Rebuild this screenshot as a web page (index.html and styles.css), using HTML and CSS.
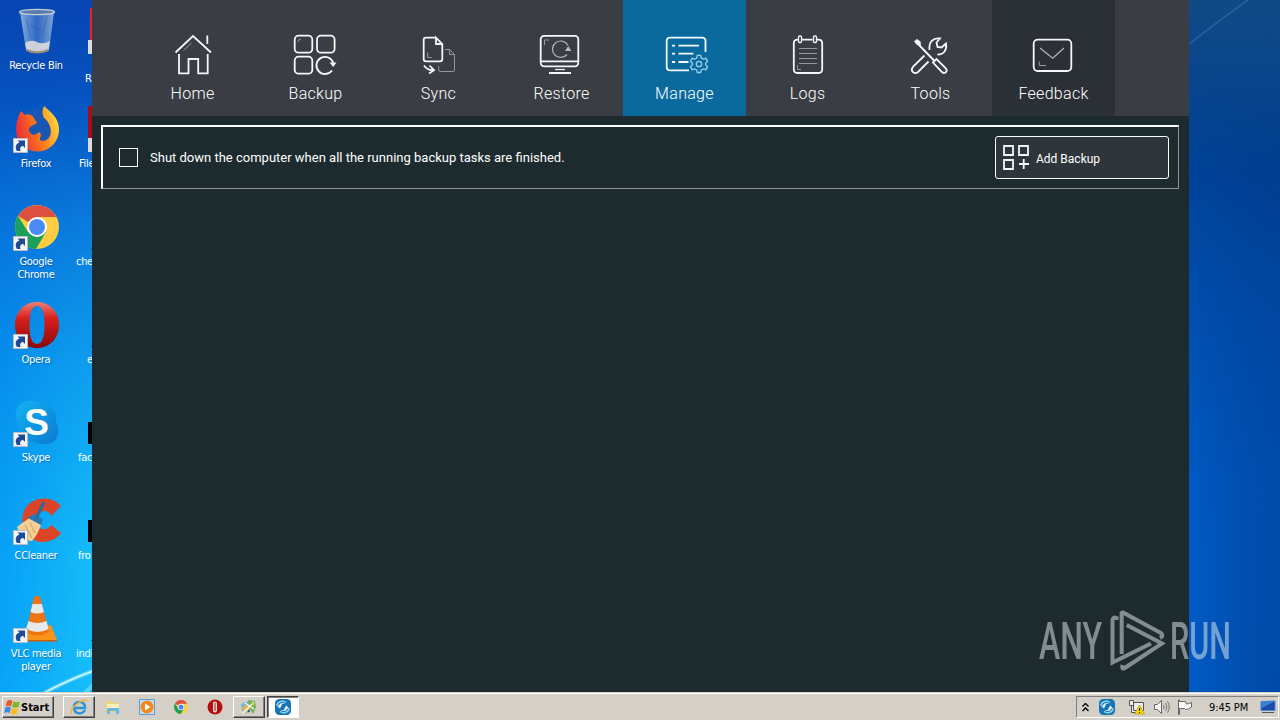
FILE: index.html
```html
<!DOCTYPE html>
<html lang="en">
<head>
    <meta charset="UTF-8">
    <meta name="viewport" content="width=device-width, initial-scale=1.0">
    <title>Manage</title>
    <link rel="stylesheet" href="styles.css">
</head>
<body>

<!-- shared symbols -->
<svg class="defs" width="0" height="0">
    <defs>
        <linearGradient id="fox" x1="0" y1=".6" x2="1" y2=".3"><stop offset="0" stop-color="#e8283c"/><stop offset=".5" stop-color="#ff7a1a"/><stop offset="1" stop-color="#ffdc3a"/></linearGradient>
        <linearGradient id="operaRed" x1="0" y1="0" x2="0" y2="1"><stop offset="0" stop-color="#f08078"/><stop offset=".35" stop-color="#d8201c"/><stop offset="1" stop-color="#8c0808"/></linearGradient>
        <linearGradient id="skype" x1="0" y1="0" x2="1" y2="1"><stop offset="0" stop-color="#12b4f4"/><stop offset="1" stop-color="#0b78d0"/></linearGradient>
        <linearGradient id="glass" x1="0" y1="0" x2="1" y2="0"><stop offset="0" stop-color="#a9c6e8" stop-opacity=".8"/><stop offset=".5" stop-color="#4b80cc" stop-opacity=".6"/><stop offset="1" stop-color="#a0bcdc" stop-opacity=".8"/></linearGradient>
    </defs>
    <symbol id="shortcut" viewBox="0 0 15 15">
        <path d="M.5.5h14v14H.5z" fill="#f4f4f4" stroke="#b9bcc2"/>
        <path d="M4 13C1.500 9 3 5.500 6.500 4.500L4.500 2.500H12V10L9.800 7.800C7.500 8.500 6.500 10 7.500 13z" fill="#1d4a92"/>
    </symbol>
    <symbol id="chrome" viewBox="0 0 44 44">
        <circle cx="22" cy="22" r="22" fill="#ffcd41"/>
        <path d="M22 22L3 11A22 22 0 0 1 41.500 12H22z" fill="#dc4f41"/>
        <path d="M3 11A22 22 0 0 0 21 44L31 27 13 27z" fill="#1ba05c"/>
        <circle cx="22" cy="22" r="10" fill="#fff"/>
        <circle cx="22" cy="22" r="8" fill="#4c8bf5"/>
    </symbol>
    <symbol id="opera" viewBox="0 0 44 46">
        <path fill="url(#operaRed)" fill-rule="evenodd" d="M22 0C35 0 44 10 44 23S35 46 22 46 0 36 0 23 9 0 22 0zM22 4C16 4 14.500 13 14.500 23S16 42 22 42 29.500 33 29.500 23 28 4 22 4z"/>
    </symbol>
    <symbol id="swirl" viewBox="0 0 16 16">
        <rect width="16" height="16" rx="4.500" fill="#1474b4"/>
        <path d="M1.500 6.500C3 2.500 7.500 1 11 3.500M14.500 9.500C13 13.500 8.500 15 5 12.500" fill="none" stroke="#8cd4f4" stroke-width="1.500"/>
        <path d="M11.500 5.500Q8 3.500 5.500 6.500H7L4.500 9.500 2 6.500H3.500Q6 2 11.500 5.500zM4.500 10.500Q8 12.500 10.500 9.500H9L11.500 6.500 14 9.500H12.500Q10 14 4.500 10.500z" fill="#f2faff"/>
    </symbol>
</svg>

<div class="desktop">
    <svg class="wallpaper" width="1280" height="692" viewBox="0 0 1280 692">
        <defs>
            <linearGradient id="skyL" x1="0" y1="0" x2="0" y2="1"><stop offset="0" stop-color="#0745b2"/><stop offset=".15" stop-color="#0653c0"/><stop offset=".32" stop-color="#0772d8"/><stop offset=".55" stop-color="#0894ec"/><stop offset=".8" stop-color="#0aaef6"/><stop offset="1" stop-color="#0cb2f8"/></linearGradient>
            <linearGradient id="skyR" x1="0" y1="0" x2="0" y2="1"><stop offset="0" stop-color="#104a86"/><stop offset=".25" stop-color="#003e90"/><stop offset=".45" stop-color="#0048a2"/><stop offset=".7" stop-color="#0050b2"/><stop offset="1" stop-color="#0050b0"/></linearGradient>
            <linearGradient id="edgeL" x1="0" y1="0" x2="1" y2="0"><stop offset="0" stop-color="#0080f4" stop-opacity=".3"/><stop offset="1" stop-color="#30d8ff" stop-opacity=".3"/></linearGradient>
            <linearGradient id="edgeR" x1="0" y1="0" x2="1" y2="0"><stop offset="0" stop-color="#0064d4" stop-opacity=".55"/><stop offset="1" stop-color="#004098" stop-opacity=".3"/></linearGradient>
            <linearGradient id="fade" x1="0" y1="0" x2="0" y2="1"><stop offset=".1" stop-color="#000"/><stop offset=".8" stop-color="#fff"/></linearGradient>
            <mask id="lower"><rect width="1280" height="692" fill="url(#fade)"/></mask>
        </defs>
        <rect width="92" height="692" fill="url(#skyL)"/>
        <rect x="1189" width="91" height="692" fill="url(#skyR)"/>
        <g mask="url(#lower)">
            <rect width="92" height="692" fill="url(#edgeL)"/>
            <rect x="1189" width="91" height="692" fill="url(#edgeR)"/>
        </g>
        <path d="M1189 44Q1220 20 1248 0" fill="none" stroke="#4a80b8" stroke-opacity=".5" stroke-width="1.500"/>
        <path d="M44 693Q68 680 93 671M85 693l8-8" fill="none" stroke="#9cecff" stroke-width="4" stroke-opacity=".45"/>
        <path d="M44 693Q68 680 93 671" fill="none" stroke="#d8f8ff" stroke-width="1.500"/>
    </svg>

    <div class="shortcuts">
        <div class="shortcut">
            <svg width="48" height="48" viewBox="0 0 48 48">
                <path d="M7 4L13 42Q24 48 36 42L41 4z" fill="url(#glass)"/>
                <path d="M12 35Q18 31 24 34T37 33L35.500 42Q24 47 13.500 42z" fill="#e6e0dc" opacity=".85"/>
                <path d="M13.500 42Q24 47 35.500 42" fill="none" stroke="#9a8c7c" stroke-width="2"/>
                <path d="M13 10l5 20M34 9l-5 20M17 17l12 7" stroke="#2b5aa8" stroke-opacity=".5" fill="none"/>
                <ellipse cx="24" cy="4" rx="17.500" ry="2.600" fill="#5a7cae" stroke="#c2ccd6" stroke-width="1.300"/>
            </svg>
            <span>Recycle Bin</span>
        </div>
        <div class="shortcut">
            <svg width="48" height="48" viewBox="0 0 48 48">
                <circle cx="25" cy="20" r="17" fill="#1857b4"/>
                <path d="M31 0C36 5 46 11 46 23A21.500 21.500 0 0 1 3 25C3 17 5 10 8 5L12 9C16 7 20 9 22 14L24 17 17 21C14 24 17 28 21 29L27 26 28 30C24 35 31 37 36 32C40 26 37 16 31 12Q28 6 31 0z" fill="url(#fox)"/>
            </svg>
            <svg class="arrow" width="15" height="15"><use href="#shortcut"/></svg>
            <span>Firefox</span>
        </div>
        <div class="shortcut">
            <svg width="48" height="48" viewBox="0 0 48 48"><use href="#chrome" x="2" y="1" width="44" height="44"/></svg>
            <svg class="arrow" width="15" height="15"><use href="#shortcut"/></svg>
            <span>Google<br>Chrome</span>
        </div>
        <div class="shortcut">
            <svg width="48" height="48" viewBox="0 0 48 48"><use href="#opera" x="2" y="0" width="44" height="46"/></svg>
            <svg class="arrow" width="15" height="15"><use href="#shortcut"/></svg>
            <span>Opera</span>
        </div>
        <div class="shortcut">
            <svg width="48" height="48" viewBox="0 0 48 48">
                <path d="M14 1C21 0 25 2 29 3C40 5 44 13 43 22C48 32 44 43 34 44C28 45 25 43 23 42C11 42 5 34 5 23C0 13 4 3 14 1z" fill="url(#skype)"/>
                <text class="skype-letter" x="23.500" y="35" text-anchor="middle">S</text>
            </svg>
            <svg class="arrow" width="15" height="15"><use href="#shortcut"/></svg>
            <span>Skype</span>
        </div>
        <div class="shortcut">
            <svg width="48" height="48" viewBox="0 0 48 48">
                <path d="M48 8C36-5 14 0 10 16C6 34 20 45 31 44C40 43 45 39 48 35L38 27C35 32 28 33 25 28C22 20 26 14 31 13C35 13 37 15 38 18z" fill="#dc4428"/>
                <path d="M4 29Q13 22 17 20L28 27Q25 36 19 43Q10 44 4 29z" fill="#f5cf94"/>
                <path d="M15 20l5-4 10 5-2 6z" fill="#2878b4"/>
                <path d="M23 21L31 4" stroke="#246ca4" stroke-width="3"/>
                <path d="M12 27l7 13M17 25l5 10" stroke="#d39a50"/>
            </svg>
            <svg class="arrow" width="15" height="15"><use href="#shortcut"/></svg>
            <span>CCleaner</span>
        </div>
        <div class="shortcut">
            <svg width="48" height="48" viewBox="0 0 48 48">
                <path d="M10 32L38 29 44 44H6z" fill="#f8941a"/>
                <path d="M6 44h38v1.500H6z" fill="#d05a08"/>
                <path d="M21 1Q24-1 27 1L36 36Q25 43 13 36z" fill="#ee7412"/>
                <path d="M19.500 8H28.800L31 16Q24 19 17.500 16zM15.500 25Q24 29 33.500 25L35.500 33Q25 39 13 33z" fill="#e6e8ea"/>
            </svg>
            <svg class="arrow" width="15" height="15"><use href="#shortcut"/></svg>
            <span>VLC media<br>player</span>
        </div>
    </div>

    <!-- second column, mostly hidden behind the window -->
    <div class="shortcuts-cut">
        <div class="cut low"><i class="strip red"></i><i class="corner"></i><span>R</span></div>
        <div class="cut near"><i class="strip darkred"></i><i class="corner"></i><span>File</span></div>
        <div class="cut"><i class="dot"></i><span>che</span></div>
        <div class="cut far"><i class="dot"></i><span>e</span></div>
        <div class="cut mid"><i class="strip black"></i><span>fac</span></div>
        <div class="cut mid"><i class="strip black"></i><span>fro</span></div>
        <div class="cut"><i class="dot"></i><span>indi</span></div>
    </div>

    <div class="window">
        <nav class="nav">
            <a class="tab">
                <svg width="45" height="44" viewBox="0 0 45 44">
                    <path d="M5.500 20.500L23 4 41 20.500M37.300 3.500v8.500M9 22v19.300h9.500V27h9.700v14.300h9.500V22"/>
                    <path class="dim" d="M13.500 18.500l8-7.500"/>
                </svg>
                <span>Home</span>
            </a>
            <a class="tab">
                <svg width="45" height="44" viewBox="0 0 45 44">
                    <rect x="1.700" y="3.700" width="17.600" height="17" rx="4"/>
                    <rect x="24" y="3.700" width="17.600" height="17" rx="4"/>
                    <rect x="1.700" y="24.700" width="17.600" height="17" rx="4"/>
                    <path d="M39 38.500A8.600 8.600 0 1 1 40.300 31"/>
                    <path class="fill" d="M36.500 30.500h7l-3.300 4.500z"/>
                    <path class="dim" d="M5 10q0-3 3-3"/>
                </svg>
                <span>Backup</span>
            </a>
            <a class="tab">
                <svg width="45" height="44" viewBox="0 0 45 44">
                    <path d="M20 5.700H10q-2.300 0-2.300 2.300V27q0 2.300 2.300 2.300h14q2.300 0 2.300-2.300V12L20 5.700V12h6.300"/>
                    <path class="dim" d="M11.700 20.500v5h4M29 17.500h4.500l5 5V38q0 1.500-1.500 1.500H24.500q-1.800 0-1.800-1.800V34M33.500 17.500v5h5"/>
                    <path d="M8 33.500q3.500 5 9 4.700M13.500 33.500l4.500 4.700-5 3.300"/>
                </svg>
                <span>Sync</span>
            </a>
            <a class="tab">
                <svg width="45" height="44" viewBox="0 0 45 44">
                    <rect x="1.700" y="3.800" width="37.600" height="30.500" rx="3.500"/>
                    <path d="M2 29.300h37M10 41h22"/>
                    <path d="M16 37.500h10" stroke-width="1.200"/>
                    <path class="dim" d="M5.500 13V8H10"/>
                    <path class="soft-line" d="M28 22.500A8.200 8.200 0 1 1 29 13.500"/>
                    <path class="fill soft" d="M26 19l3.300-5 3 5z"/>
                </svg>
                <span>Restore</span>
            </a>
            <a class="tab active">
                <svg width="45" height="44" viewBox="0 0 50 44" overflow="visible" preserveAspectRatio="xMinYMin slice">
                    <path d="M43.500 20V9q0-3.300-3.300-3.300H8Q4.700 5.700 4.700 9v26Q4.700 38.300 8 38.300h19"/>
                    <path d="M10 13.700h3M16.500 13.700H37M10 21.700h3M16.500 21.700H31.500M10 30h3M16.500 30h10"/>
                    <path class="gear" d="M35.300 23.300h3.400l.6 2.700 2 1.100 2.600-.8 1.700 2.900-2 2v1.600l2 2-1.700 2.900-2.600-.8-2 1.100-.6 2.500h-3.400l-.6-2.500-2-1.100-2.600.8-1.700-2.900 2-2v-1.600l-2-2 1.700-2.900 2.600.8 2-1.100z"/>
                    <circle class="gear" cx="37" cy="32" r="2.700"/>
                </svg>
                <span>Manage</span>
            </a>
            <a class="tab">
                <svg width="45" height="44" viewBox="0 0 45 44">
                    <path d="M13 7.700h-.5q-3.700 0-3.700 3.700V37.300Q8.800 41 12.500 41h21q3.700 0 3.700-3.700V11.400q0-3.700-3.700-3.700H32M17 7.700H27.500"/>
                    <rect x="13.500" y="4" width="3" height="6.500" rx="1" stroke-width="1.300"/>
                    <rect x="28.500" y="4" width="3" height="6.500" rx="1" stroke-width="1.300"/>
                    <path class="dim" d="M14 16.500h18M14 21.500h18M14 26.500h18M14 31.500h18M12.500 33v4.500H16"/>
                </svg>
                <span>Logs</span>
            </a>
            <a class="tab">
                <svg width="45" height="44" viewBox="0 0 45 44">
                    <path d="M21.500 18C20.500 10 25 5.500 32 6.500L28.500 10.500 29.500 15 33.500 15.500 38 11.500C39 18 36 22.500 29.500 22.500M16.500 23.500L4.700 35.200C2 39 6.500 43 10 40L20.500 29.500"/>
                    <path d="M10 12L26 28.500M25 30.500L28.500 27 38 36.500C40 39.500 36.500 42.500 34 40z"/>
                    <path class="fill" d="M6 9.500L9 7 12.500 9.500 13 13.500 9 13z"/>
                </svg>
                <span>Tools</span>
            </a>
            <a class="tab feedback">
                <svg width="45" height="44" viewBox="0 0 45 44">
                    <rect x="2.700" y="7.700" width="37.600" height="31.300" rx="4"/>
                    <path class="soft-line" d="M9 16L21.700 26.300 33 16"/>
                    <path class="dim" d="M8.300 29.500v4H15"/>
                </svg>
                <span>Feedback</span>
            </a>
        </nav>

        <div class="toolbar">
            <label class="option"><i class="box"></i><span>Shut down the computer when all the running backup tasks are finished.</span></label>
            <button class="add-button">
                <svg width="28" height="28" viewBox="0 0 28 28">
                    <path d="M2 3h9v9H2zM17 3h9v9h-9zM2 17h9v9H2zM21.700 16v10M17 21h10"/>
                </svg>
                <span>Add Backup</span>
            </button>
        </div>
    </div>

    <svg class="watermark" width="230" height="90" viewBox="0 0 230 90">
        <text x="9" y="59" textLength="63" lengthAdjust="spacingAndGlyphs">ANY</text>
        <text x="140" y="59" textLength="61" lengthAdjust="spacingAndGlyphs">RUN</text>
        <path d="M86.500 20V18Q82.500 16.500 82.500 21V62.500L121 43.500M91.700 54V13L93 12.500 131 33Q134 36 130 38M96.700 25L132 43.500 94 68.500Q91.500 69 92.500 65"/>
    </svg>

    <div class="taskbar">
        <div class="start">
            <svg width="17" height="17" viewBox="0 0 17 17">
                <path d="M3 2Q6 0 8.500 2L7 7.500Q4.500 6 1.500 7.500z" fill="#e8582c"/>
                <path d="M9.500 2.500Q12 4 16 2.500L14.500 8Q11 9.500 8 8z" fill="#7cba2c"/>
                <path d="M1.500 8.500Q4 7 7 8.500L5.500 14Q3 12.500 0 14z" fill="#3a8ce0"/>
                <path d="M8 9Q11 10.500 14 9L12.500 15Q9 16.500 6.500 14.500z" fill="#fbbc1c"/>
            </svg>
            <b>Start</b>
        </div>
        <div class="tasks">
            <div class="task raised">
                <svg width="18" height="18" viewBox="0 0 18 18">
                    <path d="M15 12Q13 15.500 9.500 15.500 4 15 4 9.500T9.500 4Q15 4 15 10H5" fill="none" stroke="#2c94e0" stroke-width="2.500"/>
                    <path d="M2 16Q-1 12 7 6T17 3" fill="none" stroke="#efb82c" stroke-width="1.500"/>
                </svg>
            </div>
            <div class="task">
                <svg width="18" height="18" viewBox="0 0 18 18">
                    <path d="M2 3h5l1 2h7v9H2z" fill="#f2d574"/><path d="M3 6h12v4H3z" fill="#fbf0b8"/>
                    <path d="M3 16v-5q0-1 1-1h10q1 0 1 1v5h-3v-3H6v3z" fill="#68b8e4"/>
                </svg>
            </div>
            <div class="task">
                <svg width="18" height="18" viewBox="0 0 18 18">
                    <path d="M1.500 1.500h15v15h-15z" fill="#c4def4" stroke="#5a9cd4"/>
                    <circle cx="9" cy="9" r="6.500" fill="#f4861c"/><path d="M7 5.500v7L12.500 9z" fill="#fff"/>
                </svg>
            </div>
            <div class="task"><svg width="14" height="14"><use href="#chrome"/></svg></div>
            <div class="task">
                <svg width="16" height="16" viewBox="0 0 16 16">
                    <circle cx="8" cy="8" r="7.500" fill="#b80e10"/><rect x="6" y="2.500" width="4" height="11" rx="2" fill="#f0dcdc"/><path d="M8 4v8" stroke="#a01010"/>
                </svg>
            </div>
            <div class="task raised">
                <svg width="18" height="18" viewBox="0 0 18 18">
                    <path d="M1 6l8-3 5 4-6 8-6-2z" fill="#74b6d8"/><path d="M2 10q6-6 9-1l-6 7z" fill="#e4b64c"/>
                    <path d="M8 2l7 1 1 6-3 7-4-7z" fill="#76b050"/><path d="M3 15L14 4M5 5l9 6" stroke="#fff" stroke-width="1.200"/>
                    <circle cx="13" cy="6" r="1.300" fill="#e8d030"/><circle cx="9" cy="13" r="1.200" fill="#28689c"/>
                </svg>
            </div>
            <div class="task current"><svg width="16" height="16"><use href="#swirl"/></svg></div>
        </div>
        <div class="tray">
            <svg class="chevrons" width="7" height="9" viewBox="0 0 7 9"><path d="M.5 3.500l3-3 3 3M.5 8l3-3 3 3" fill="none" stroke="#000" stroke-width="1.400"/></svg>
            <svg class="sync-app" width="16" height="16"><use href="#swirl"/></svg>
            <svg class="network" width="17" height="16" viewBox="0 0 17 16">
                <path d="M5.500 3.500h10v8h-10zM1.500 1.500h4v5h-4zM3.500 6.500v7h5" fill="#eee" stroke="#555"/>
                <path d="M11.500 6L16.500 15H6.500z" fill="#ffd800" stroke="#b09000" stroke-width=".6"/><path d="M11.500 9v3M11.500 13v1" stroke="#222" stroke-width="1.200"/>
            </svg>
            <svg class="sound" width="17" height="16" viewBox="0 0 17 16">
                <path d="M1.500 5.500h3l4-4v13l-4-4h-3z" fill="#f8f8f8" stroke="#666"/>
                <path d="M10.500 6q1.500 2 0 4M12.500 4q3 4 0 8M14.500 2.500q3.500 5.500 0 11" fill="none" stroke="#777"/>
            </svg>
            <svg class="flag" width="16" height="16" viewBox="0 0 16 16"><path d="M1.500 1v14.500h1V9.500h5l1 1q3 0 6-2.500V3.500q-3 1.500-5 1.500L8.500 2.500h-6V1z" fill="#fafafa" stroke="#666"/></svg>
            <span class="clock">9:45 PM</span>
            <svg width="16" height="14" viewBox="0 0 16 14"><path d="M1 1.500L15 1v9.500H1z" fill="#1c4ca8" stroke="#4888d8"/><path d="M1.500 2l12 0L2 8z" fill="#4080d4"/><path d="M2 12.500h12" stroke="#555"/></svg>
        </div>
    </div>
</div>

</body>
</html>
```
FILE: styles.css
```css
* {
    box-sizing: border-box;
}
body {
    margin: 0;
    overflow: hidden;
    font-family: "DejaVu Sans Condensed", "DejaVu Sans", sans-serif;
    font-size: 11px;
}
.defs {
    position: absolute;
}
svg {
    display: block;
    flex: none;
}
.desktop {
    position: relative;
    display: flex;
    width: 1280px;
    height: 720px;
    background-color: #0050b0;
    overflow: hidden;
}
.wallpaper {
    position: absolute;
    left: 0;
    top: 0;
}

/* desktop icons */
.shortcuts {
    position: relative;
    width: 76px;
    padding-top: 8px;
}
.shortcut {
    position: relative;
    height: 98px;
    padding-left: 13px;
    color: #fff;
}
.shortcut .arrow {
    position: absolute;
    left: 13px;
    top: 32px;
}
.shortcut span {
    display: block;
    width: 76px;
    margin: 3px 0 0 -15px;
    line-height: 13px;
    letter-spacing: -0.3px;
    text-align: center;
    text-shadow: 1px 1px 1px rgba(0, 30, 90, 0.35);
}
.skype-letter {
    font: bold 37px "Liberation Sans", sans-serif;
    fill: #fff;
}
.shortcuts-cut {
    position: relative;
    width: 16px;
    padding-top: 8px;
    overflow: hidden;
}
.cut {
    position: relative;
    height: 98px;
    padding-top: 51px;
    line-height: 13px;
    letter-spacing: -0.3px;
    color: #fff;
}
.cut.mid, .cut.near {
    padding-left: 2px;
}
.cut.near {
    padding-left: 3px;
}
.cut.far {
    padding-left: 11px;
}
.cut.low {
    padding: 64px 0 0 9px;
}
.strip, .corner, .dot {
    position: absolute;
    right: 0;
    width: 4px;
}
.strip {
    top: 0;
    height: 32px;
}
.red {
    background-color: #ee2222;
    width: 2px;
}
.darkred {
    background-color: #a80c14;
}
.black {
    top: 22px;
    height: 22px;
    background-color: #000;
}
.corner {
    top: 32px;
    height: 14px;
    background-color: #dcdcdc;
}
.dot {
    top: 44px;
    width: 1px;
    height: 1px;
    background-color: #145070;
}

/* application window */
.window {
    position: relative;
    width: 1097px;
    height: 692px;
    background-color: #1d2b2f;
    color: #fff;
}
.nav {
    display: flex;
    height: 116px;
    padding-left: 39px;
    background-color: #3a3e44;
}
.tab {
    display: flex;
    flex-direction: column;
    align-items: center;
    width: 123px;
    padding-top: 32px;
    font: 300 16px/20px Roboto, "Liberation Sans", sans-serif;
    letter-spacing: 0.3px;
}
.tab span {
    margin-top: 8px;
}
.tab.active {
    background-color: #0a6a9e;
}
.tab.feedback {
    background-color: #2b2f36;
}
.tab svg, .add-button svg {
    fill: none;
    stroke: #f4f8fc;
    stroke-width: 1.8;
}
.tab .dim {
    stroke: #9298a0;
    stroke-width: 1;
}
.tab .soft-line {
    stroke: #b4b8be;
    stroke-width: 1.2;
}
.tab .gear {
    stroke: #9ccdea;
    stroke-width: 1.3;
}
.tab .fill {
    fill: #f4f8fc;
    stroke: none;
}
.tab .soft {
    fill: #b8bcc2;
}
.toolbar {
    display: flex;
    align-items: center;
    justify-content: space-between;
    height: 64px;
    margin: 9px 10px 0 9px;
    padding: 0 9px 1px 16px;
    border-style: solid;
    border-width: 2px 1px 1px 2px;
    border-color: #fff #8a9496 #8a9496 #fff;
}
.option {
    display: flex;
    align-items: center;
    gap: 12px;
    font: 13px/16px Roboto, "Liberation Sans", sans-serif;
}
.option span {
    margin-top: 1px;
}
.box {
    width: 19px;
    height: 19px;
    border: 1px solid #fff;
}
.add-button {
    display: flex;
    align-items: center;
    gap: 6px;
    width: 174px;
    height: 43px;
    padding: 0 6px;
    border: 1px solid #fff;
    border-radius: 3px;
    background-color: #2f363b;
    color: #fff;
    font: 12px/16px Roboto, "Liberation Sans", sans-serif;
}
.add-button span {
    margin-top: 3px;
}

.watermark {
    position: absolute;
    left: 1030px;
    top: 600px;
    opacity: 0.5;
    overflow: visible;
    fill: none;
    stroke: #e8edf0;
    stroke-width: 4;
}
.watermark text {
    font: 500 51px Roboto, sans-serif;
    fill: #e8edf0;
    stroke: none;
}

/* taskbar */
.taskbar {
    position: absolute;
    left: 0;
    bottom: 0;
    display: flex;
    align-items: center;
    width: 1280px;
    height: 28px;
    padding: 2px 1px 1px 2px;
    background-color: #d4d0c8;
    border-top: 1px solid #d4d0c8;
    box-shadow: inset 0 1px #fff;
}
.start, .raised {
    border: 1px solid;
    border-color: #fff #404040 #404040 #fff;
    box-shadow: inset -1px -1px #808080;
}
.start {
    display: flex;
    align-items: center;
    width: 52px;
    height: 22px;
    padding-left: 1px;
}
.start b {
    font-size: 11px;
    letter-spacing: 0;
}
.tasks {
    display: flex;
    gap: 2px;
    margin-left: 9px;
}
.task {
    display: flex;
    align-items: center;
    justify-content: center;
    width: 32px;
    height: 22px;
}
.task.current {
    border: 1px solid;
    border-color: #404040 #fff #fff #404040;
    background-color: #fff;
    box-shadow: inset 1px 1px #808080;
}
.tray {
    display: flex;
    align-items: center;
    width: 203px;
    height: 22px;
    margin-left: auto;
    padding-left: 5px;
    border: 1px solid;
    border-color: #808080 #fff #fff #808080;
}
.sync-app {
    margin-left: 10px;
}
.network {
    margin-left: 13px;
}
.sound {
    margin-left: 8px;
}
.flag {
    margin-left: 7px;
}
.clock {
    width: 51px;
    margin-left: 16px;
    letter-spacing: -0.1px;
    white-space: nowrap;
}
```
